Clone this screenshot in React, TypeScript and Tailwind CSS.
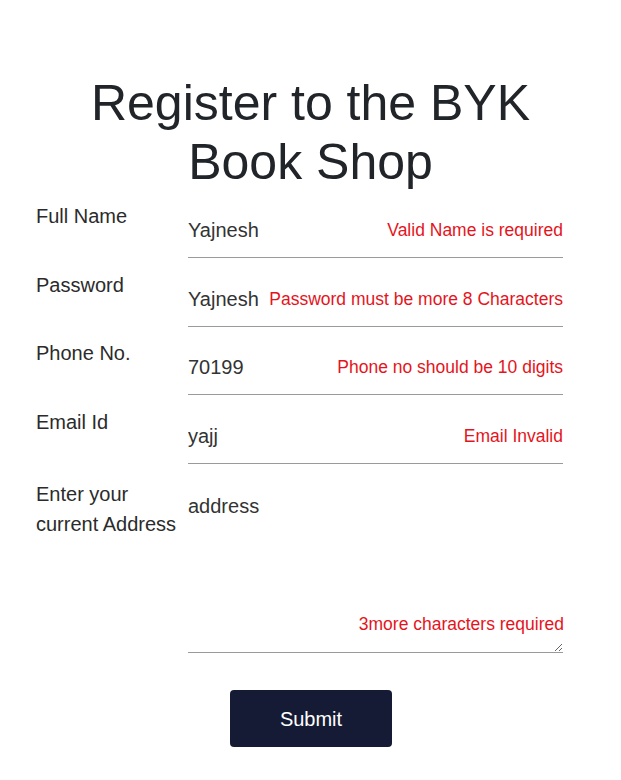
import React from "react";

const fields = [
  { label: "Full Name", value: "Yajnesh", error: "Valid Name is required", gap: "mt-0" },
  { label: "Password", value: "Yajnesh", error: "Password must be more 8 Characters", gap: "mt-[12px]" },
  { label: "Phone No.", value: "70199", error: "Phone no should be 10 digits", gap: "mt-[11px]" },
  { label: "Email Id", value: "yajj", error: "Email Invalid", gap: "mt-[12px]" },
];

export default function App() {
  return (
    <div className="w-full bg-white font-['Liberation_Sans',Arial,sans-serif] text-[#222]">
      <h1 className="pt-[74px] text-center text-[50px] leading-[59px] font-normal text-[#212529]">
        Register to the BYK
        <br />
        Book Shop
      </h1>

      <form className="mt-[9px] pl-[36px] pb-[33px]">
        {fields.map((f) => (
          <div key={f.label} className={`flex items-start ${f.gap}`}>
            <label className="w-[152px] shrink-0 text-[20px] leading-[30px] text-[#2b2b2b]">
              {f.label}
            </label>
            <div className="flex w-[375px] items-center border-b border-[#9a9a9a] pt-[14px] pb-[12px]">
              <input
                defaultValue={f.value}
                className="min-w-0 flex-1 bg-transparent text-[20px] leading-[30px] text-[#333] outline-none"
              />
              <span className="shrink-0 pl-2 text-[17.5px] leading-[30px] text-[#e5141c]">
                {f.error}
              </span>
            </div>
          </div>
        ))}

        <div className="mt-[15px] flex items-start">
          <label className="w-[152px] shrink-0 text-[20px] leading-[30px] text-[#2b2b2b]">
            Enter your current Address
          </label>
          <div className="relative w-[375px]">
            <textarea
              defaultValue="address"
              className="block h-[174px] w-full resize-y border-b border-[#9a9a9a] bg-transparent pt-[12px] text-[20px] leading-[30px] text-[#333] outline-none"
            />
            <span className="absolute right-[-1px] bottom-[19px] text-[17.5px] leading-[20px] text-[#e5141c]">
              3more characters required
            </span>
          </div>
        </div>

        <div className="mt-[37px] flex justify-center pr-[36px]">
          <button
            type="button"
            className="ml-[1px] h-[57px] w-[162px] rounded-[4px] bg-[#161b35] text-[20px] text-white"
          >
            Submit
          </button>
        </div>
      </form>
    </div>
  );
}
